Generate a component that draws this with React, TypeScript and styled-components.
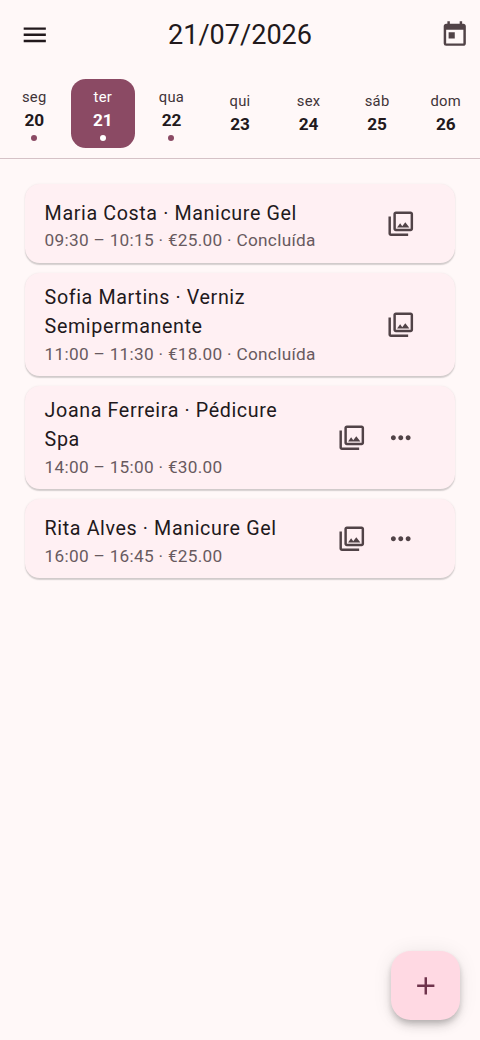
import React from 'react';
import styled, { createGlobalStyle } from 'styled-components';
import { MdAdd, MdMenu, MdMoreHoriz, MdOutlinePhotoLibrary, MdToday } from 'react-icons/md';

const GlobalStyle = createGlobalStyle`
  *, *::before, *::after { box-sizing: border-box; }
  html, body { margin: 0; padding: 0; background: #fff8f8; }
  body { font-family: Roboto, 'Noto Sans', sans-serif; color: #22191c; }
  button { font: inherit; color: inherit; border: 0; background: none; padding: 0; margin: 0; cursor: pointer; }
`;

const Screen = styled.div`
  min-height: 100vh;
  display: flex;
  flex-direction: column;
  background: #fff8f8;
`;

const AppBar = styled.header`
  display: grid;
  grid-template-columns: 69px 1fr 69px;
  align-items: center;
  height: 69px;
`;

const IconButton = styled.button<{ $tone?: string }>`
  display: flex;
  align-items: center;
  justify-content: center;
  width: 49.23px;
  height: 49.23px;
  color: ${({ $tone }) => $tone ?? '#514347'};
  svg { display: block; width: 29.54px; height: 29.54px; }
`;

const Leading = styled.div`
  display: flex;
  justify-content: center;
`;

const Trailing = styled.div`
  display: flex;
  justify-content: flex-end;
  margin-right: 0.4px;
`;

const Title = styled.h1`
  margin: 0;
  padding-top: 1px;
  text-align: center;
  font-size: 27.08px;
  line-height: 34px;
  font-weight: 400;
`;

const Week = styled.nav`
  display: grid;
  grid-template-columns: repeat(7, 1fr);
  height: 90px;
  padding: 10px 0;
  border-bottom: 1px solid #d5c2c7;
`;

const Day = styled.button<{ $selected?: boolean }>`
  display: flex;
  flex-direction: column;
  align-items: center;
  justify-content: center;
  margin: 0 2.46px;
  padding-top: 1px;
  border-radius: 14.77px;
  color: ${({ $selected }) => ($selected ? '#ffffff' : '#22191c')};
  background: ${({ $selected }) => ($selected ? '#8b4a64' : 'transparent')};
`;

const DayName = styled.span<{ $selected?: boolean }>`
  font-size: 14.77px;
  line-height: 20.6px;
  letter-spacing: 0.3px;
  color: ${({ $selected }) => ($selected ? '#ffffff' : '#3f3438')};
`;

const DayNumber = styled.span`
  font-size: 17.23px;
  line-height: 24.6px;
  font-weight: 700;
  letter-spacing: -0.1px;
`;

const Dot = styled.span<{ $selected?: boolean }>`
  width: 6px;
  height: 6px;
  margin-top: 2.6px;
  border-radius: 50%;
  background: ${({ $selected }) => ($selected ? '#ffffff' : '#8b4a64')};
`;

const Agenda = styled.main`
  display: flex;
  flex-direction: column;
  gap: 9.85px;
  padding: 25px 24.62px;
`;

const Card = styled.article`
  display: flex;
  align-items: center;
  gap: 19.69px;
  min-height: 78.77px;
  padding: 0 29.54px 0 20px;
  border-radius: 14.77px;
  background: #fff0f3;
  box-shadow: 0 1.2px 1.2px rgba(0, 0, 0, 0.15), 0 0.6px 2.4px rgba(0, 0, 0, 0.06);
`;

const Details = styled.div<{ $tall?: boolean }>`
  flex: 1;
  min-width: 0;
  padding: ${({ $tall }) => ($tall ? '9.85px' : '14.8px')} 0 9.85px;
`;

const Heading = styled.h2`
  margin: 0;
  font-size: 19.69px;
  line-height: 29.54px;
  font-weight: 400;
  letter-spacing: 0.615px;
`;

const Info = styled.p`
  margin: 0;
  font-size: 17.23px;
  line-height: 24.62px;
  letter-spacing: 0.29px;
  color: #685a5f;
`;

const Actions = styled.div`
  display: flex;
`;

const Fab = styled.button`
  position: fixed;
  right: 19.69px;
  bottom: 19.69px;
  display: flex;
  align-items: center;
  justify-content: center;
  width: 68.92px;
  height: 68.92px;
  border-radius: 19.69px;
  background: #ffd9e3;
  color: #6f334c;
  box-shadow: 0 3.7px 6px -1px rgba(0, 0, 0, 0.2), 0 7px 12px rgba(0, 0, 0, 0.1), 0 1px 20px rgba(0, 0, 0, 0.08);
  svg { display: block; width: 29.54px; height: 29.54px; }
`;

const days = [
  { name: 'seg', number: 20, busy: true },
  { name: 'ter', number: 21, busy: true, selected: true },
  { name: 'qua', number: 22, busy: true },
  { name: 'qui', number: 23 },
  { name: 'sex', number: 24 },
  { name: 'sáb', number: 25 },
  { name: 'dom', number: 26 },
];

const appointments = [
  { title: 'Maria Costa · Manicure Gel', info: '09:30 – 10:15 · €25.00 · Concluída', done: true },
  { title: 'Sofia Martins · Verniz Semipermanente', info: '11:00 – 11:30 · €18.00 · Concluída', done: true, tall: true },
  { title: 'Joana Ferreira · Pédicure Spa', info: '14:00 – 15:00 · €30.00', tall: true },
  { title: 'Rita Alves · Manicure Gel', info: '16:00 – 16:45 · €25.00' },
];

export default function App() {
  return (
    <Screen>
      <GlobalStyle />
      <AppBar>
        <Leading>
          <IconButton $tone="#22191c" aria-label="Menu"><MdMenu /></IconButton>
        </Leading>
        <Title>21/07/2026</Title>
        <Trailing>
          <IconButton aria-label="Hoje"><MdToday /></IconButton>
        </Trailing>
      </AppBar>
      <Week>
        {days.map((day) => (
          <Day key={day.number} $selected={day.selected}>
            <DayName $selected={day.selected}>{day.name}</DayName>
            <DayNumber>{day.number}</DayNumber>
            {day.busy && <Dot $selected={day.selected} />}
          </Day>
        ))}
      </Week>
      <Agenda>
        {appointments.map((item) => (
          <Card key={item.title}>
            <Details $tall={item.tall}>
              <Heading>{item.title}</Heading>
              <Info>{item.info}</Info>
            </Details>
            <Actions>
              <IconButton aria-label="Fotos"><MdOutlinePhotoLibrary /></IconButton>
              {!item.done && <IconButton aria-label="Mais"><MdMoreHoriz /></IconButton>}
            </Actions>
          </Card>
        ))}
      </Agenda>
      <Fab aria-label="Adicionar"><MdAdd /></Fab>
    </Screen>
  );
}
